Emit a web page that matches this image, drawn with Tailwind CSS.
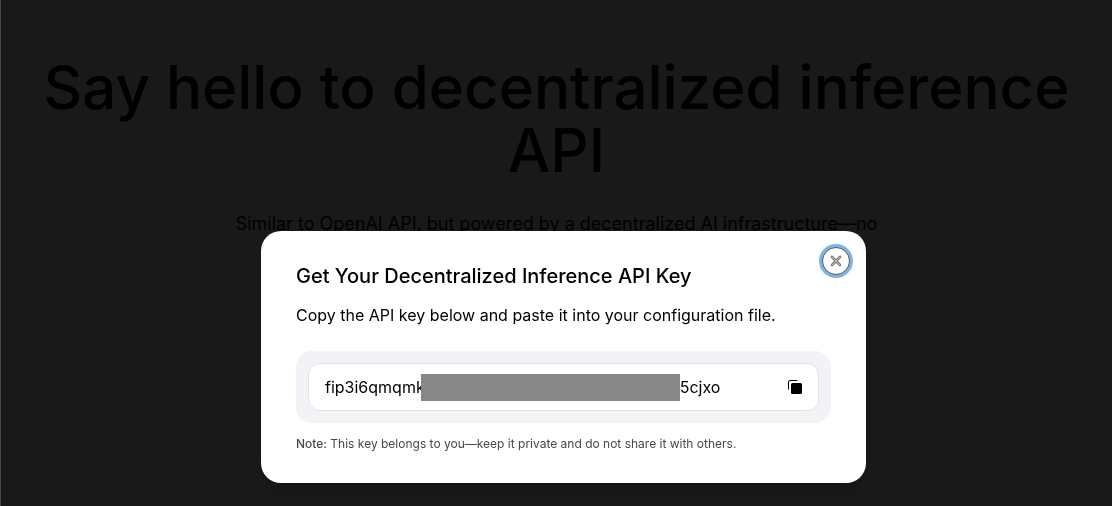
<!DOCTYPE html>
<html lang="en">
<head>
<meta charset="utf-8">
<meta name="viewport" content="width=device-width, initial-scale=1">
<title>Decentralized inference API</title>
<script src="https://cdn.jsdelivr.net/npm/@tailwindcss/browser@4"></script>
</head>
<body class="min-h-screen overflow-hidden border-l border-[#484848] bg-[#191919] font-['Inter',sans-serif] text-black">
<main class="px-8 pt-14 text-center">
<h1 class="text-[60px] leading-[63px] font-medium">Say hello to decentralized inference API</h1>
<p class="mx-auto mt-7 max-w-[660px] text-lg leading-7">Similar to OpenAI API, but powered by a decentralized AI infrastructure—no</p>
</main>
<div class="fixed inset-x-0 bottom-[23px] flex justify-center pl-[15px]">
<section role="dialog" aria-labelledby="title" class="relative w-full max-w-[605px] rounded-[20px] bg-white px-[35px] pt-8 pb-[30px] shadow-lg">
<button type="button" aria-label="Close" class="absolute top-4 right-4 flex size-7 items-center justify-center rounded-full border border-[#555] bg-white ring-3 ring-[#7db4e6]">
<svg class="size-3" viewBox="0 0 12 12" fill="none" stroke-linecap="round"><path d="M2 2l8 8M10 2l-8 8" stroke="#777" stroke-width="2.6"/><path d="M2 2l8 8M10 2l-8 8" stroke="#c4c4c4" stroke-width="1"/></svg>
</button>
<h2 id="title" class="text-xl leading-[26px] font-medium">Get Your Decentralized Inference API Key</h2>
<p class="mt-3.5 text-base leading-6">Copy the API key below and paste it into your configuration file.</p>
<div class="mt-6 rounded-2xl bg-[#f2f3f7] p-3">
<div class="flex h-12 items-center rounded-xl border border-[#e1e3ea] bg-white px-4">
<span class="relative z-0 flex items-center">fip3i6qmqmk<span class="relative z-10 -ml-1 h-[27px] w-[259px] bg-[#878787]"></span>5cjxo</span>
<button type="button" aria-label="Copy key" class="ml-auto"><svg class="size-4" viewBox="0 0 16 16"><path d="M11.500 1.500H4A1.500 1.500 0 0 0 2.500 3v7.500" fill="none" stroke="#000"/><rect x="5" y="4" width="11" height="11" rx="1.500"/></svg></button>
</div>
</div>
<p class="mt-3 text-xs leading-[18px] text-[#484848]"><strong class="font-medium">Note:</strong> This key belongs to you—keep it private and do not share it with others.</p>
</section>
</div>
</body>
</html>
